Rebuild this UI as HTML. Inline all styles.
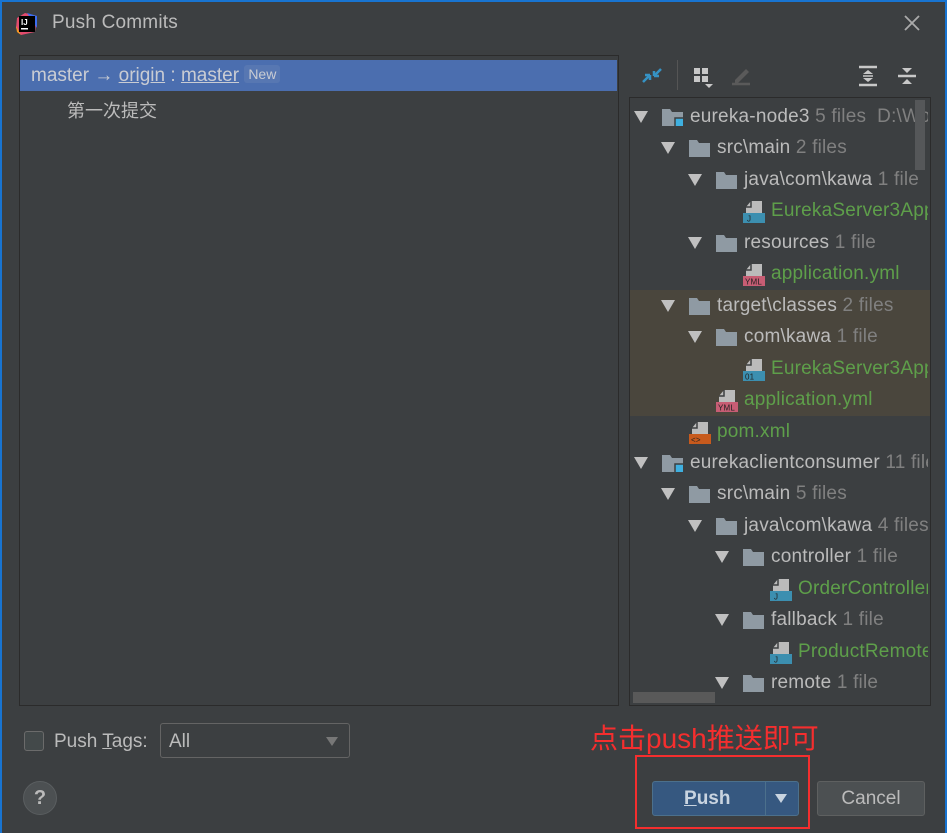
<!DOCTYPE html>
<html><head><meta charset="utf-8"><style>
*{margin:0;padding:0;box-sizing:border-box}
body{width:947px;height:833px;overflow:hidden;background:#3c3f41;font-family:"Liberation Sans","Noto Sans CJK SC",sans-serif;color:#bbbbbb;position:relative}
.frame{position:absolute;left:0;top:0;width:947px;height:833px;border:2px solid #1874d1;border-bottom:none}
.abs{position:absolute}
.row{position:absolute;height:31px;font-size:19px;letter-spacing:0.2px;line-height:31px;white-space:nowrap}
.arr{position:absolute;width:0;height:0;border-left:7px solid transparent;border-right:7px solid transparent;border-top:12px solid #c0c0c0;top:10px}
.fold{position:absolute;top:8px;width:21px;height:17px}
.g{color:#808080}
.gr{color:#5e9f4a}
.file{position:absolute;top:4px;width:22px;height:24px}
</style></head><body>
<div class="frame"></div>
<svg class="abs" style="left:15px;top:12px" width="24" height="24" viewBox="0 0 24 24"><path d="M2 6 L10 1 L22 4 L20 20 L6 23 L1 16Z" fill="#e34b6e"/><path d="M12 1 L22 4 L22 16Z" fill="#3b6df0"/><path d="M1 14 L6 23 L2 20Z" fill="#f39b1f"/><rect x="4" y="4" width="16" height="16" fill="#000"/><text x="6" y="13" font-size="8" font-weight="bold" fill="#fff" font-family="Liberation Sans">IJ</text><rect x="6" y="16" width="7" height="1.5" fill="#fff"/></svg>
<div class="abs" style="left:52px;top:12px;font-size:19px;letter-spacing:0.2px;color:#bbbbbb">Push Commits</div>
<svg class="abs" style="left:903px;top:14px" width="18" height="18"><path d="M2 2L16 16M16 2L2 16" stroke="#aaa" stroke-width="1.8"/></svg>
<div class="abs" style="left:19px;top:55px;width:600px;height:651px;border:1px solid #2b2b2b;background:#3c3f41"></div>
<div class="abs" style="left:20px;top:60px;width:597px;height:31px;background:#4b6eaf"></div>
<div class="abs" style="left:31px;top:65px;font-size:19px;color:#c9ccd3;white-space:nowrap">master → <u>origin</u> : <u>master</u> <span style="font-size:14px;background:#5777b2;padding:1px 4px;border-radius:3px;color:#c9ccd3;position:relative;top:-2px">New</span></div>
<div class="abs" style="left:67px;top:97px;font-size:18px;color:#bbbbbb">第一次提交</div>
<svg class="abs" style="left:640px;top:64px" width="24" height="24"><path d="M3 18L10 11M10 11H5M10 11V16M21 5L14 12M14 12H19M14 12V7" stroke="#3592c4" stroke-width="2.5" fill="none"/></svg>
<div class="abs" style="left:677px;top:60px;width:1px;height:30px;background:#555"></div>
<svg class="abs" style="left:692px;top:66px" width="26" height="26"><rect x="2" y="2" width="6" height="6" fill="#c8c8c8"/><rect x="10" y="2" width="6" height="6" fill="#c8c8c8"/><rect x="2" y="10" width="6" height="6" fill="#c8c8c8"/><rect x="10" y="10" width="6" height="6" fill="#c8c8c8"/><path d="M13 18h8l-4 4z" fill="#c8c8c8"/></svg>
<svg class="abs" style="left:729px;top:64px" width="24" height="24"><path d="M3 20H21" stroke="#5a5a5a" stroke-width="2.5"/><path d="M6 16L17 5L20 8L9 19H6Z" fill="#5a5a5a"/></svg>
<svg class="abs" style="left:857px;top:65px" width="22" height="22"><path d="M2 2H20M2 20H20" stroke="#c8c8c8" stroke-width="2.5"/><path d="M6 9L11 5L16 9ZM6 13L11 17L16 13Z" fill="#c8c8c8"/><path d="M6 11H16" stroke="#c8c8c8" stroke-width="1.5"/></svg>
<svg class="abs" style="left:896px;top:65px" width="22" height="22"><path d="M2 11H20" stroke="#c8c8c8" stroke-width="2.5"/><path d="M6 3L11 8L16 3ZM6 19L11 14L16 19Z" fill="#c8c8c8"/></svg>
<div class="abs" style="left:629px;top:97px;width:302px;height:609px;border:1px solid #2b2b2b;background:#3c3f41;overflow:hidden">
<div class="abs" style="left:0;top:192px;width:300px;height:126px;background:#4a463d"></div>
</div>
<div class="abs" style="left:630px;top:98px;width:298px;height:607px;overflow:hidden">
<div id="rows"></div>
</div>
<div class="abs" style="left:915px;top:100px;width:10px;height:70px;background:#555759"></div>
<div class="abs" style="left:633px;top:692px;width:82px;height:11px;background:#595959"></div>
<script>
var rows=[
[0,'m','eureka-node3',' 5 files&nbsp; D:\\Wo'],
[1,'f','src\\main',' 2 files'],
[2,'f','java\\com\\kawa',' 1 file'],
[3,'j','EurekaServer3App',''],
[2,'f','resources',' 1 file'],
[3,'y','application.yml',''],
[1,'f','target\\classes',' 2 files'],
[2,'f','com\\kawa',' 1 file'],
[3,'c','EurekaServer3App',''],
[2,'y','application.yml',''],
[1,'x','pom.xml',''],
[0,'m','eurekaclientconsumer',' 11 files'],
[1,'f','src\\main',' 5 files'],
[2,'f','java\\com\\kawa',' 4 files'],
[3,'f','controller',' 1 file'],
[4,'j','OrderController',''],
[3,'f','fallback',' 1 file'],
[4,'j','ProductRemote',''],
[3,'f','remote',' 1 file']];
var h='';
rows.forEach(function(r,i){
var top=3+i*31.45, x=4+r[0]*27;
h+='<div class="row" style="top:'+top+'px;left:0;width:300px">';
var fileType=(r[1]=='j'||r[1]=='y'||r[1]=='c'||r[1]=='x');
if(!fileType){h+='<div class="arr" style="left:'+x+'px"></div>';
 h+='<svg class="fold" style="left:'+(x+28)+'px" viewBox="0 0 21 17"><path d="M0 0H8L10 3H21V17H0Z" fill="#8f9aa3"/>'+(r[1]=='m'?'<rect x="13" y="9" width="9" height="9" fill="#3fb0e0" stroke="#3c3f41" stroke-width="1.5"/>':'')+'</svg>';
 h+='<span style="position:absolute;left:'+(x+56)+'px;color:#bbbbbb">'+r[2]+'<span class="g">'+r[3]+'</span></span>';}
else{var c={j:'#3c8fb0',y:'#c75d74',c:'#3c8fb0',x:'#c75a1d'}[r[1]],t={j:'J',y:'YML',c:'01',x:'&lt;&gt;'}[r[1]];
 h+='<svg class="file" style="left:'+(x+28)+'px" viewBox="0 0 22 24"><path d="M8 2H19V14H3V8Z" fill="#bbbbbb"/><path d="M8 2V8H3" fill="none" stroke="#3c3f41" stroke-width="1.5"/><rect x="0" y="14" width="22" height="10" fill="'+c+'"/><text x="'+(r[1]=='j'?4:2)+'" y="22.5" font-size="8" fill="#222" font-family="Liberation Sans">'+t+'</text></svg>';
 h+='<span class="gr" style="position:absolute;left:'+(x+56)+'px">'+r[2]+'</span>';}
h+='</div>';});
document.getElementById('rows').innerHTML=h;
</script>
<div class="abs" style="left:24px;top:731px;width:20px;height:20px;border:1px solid #6b6b6b;border-radius:3px;background:#43494a"></div>
<div class="abs" style="left:54px;top:731px;font-size:19px;color:#bbbbbb">Push <u>T</u>ags:</div>
<div class="abs" style="left:160px;top:723px;width:190px;height:35px;border:1px solid #646464;border-radius:3px;background:#3c3f41"></div>
<div class="abs" style="left:169px;top:731px;font-size:19px;color:#bbbbbb">All</div>
<div class="abs" style="left:326px;top:737px;border-left:6px solid transparent;border-right:6px solid transparent;border-top:9px solid #777"></div>
<div class="abs" style="left:590px;top:717px;font-size:28px;color:#f52e2e;white-space:nowrap">点击push推送即可</div>
<div class="abs" style="left:635px;top:755px;width:175px;height:74px;border:2px solid #f52e2e"></div>
<div class="abs" style="left:23px;top:781px;width:34px;height:34px;border-radius:50%;background:#4c5052;border:1px solid #5a5e60;color:#bbb;font-size:20px;font-weight:bold;text-align:center;line-height:32px">?</div>
<div class="abs" style="left:652px;top:781px;width:147px;height:35px;background:#365880;border:1px solid #4c708c;border-radius:3px"></div>
<div class="abs" style="left:765px;top:782px;width:1px;height:33px;background:#4c708c"></div>
<div class="abs" style="left:684px;top:788px;font-size:19px;font-weight:bold;color:#c9d4e0"><u>P</u>ush</div>
<div class="abs" style="left:775px;top:794px;border-left:6px solid transparent;border-right:6px solid transparent;border-top:9px solid #c9d4e0"></div>
<div class="abs" style="left:817px;top:781px;width:108px;height:35px;background:#4c5052;border:1px solid #5e6060;border-radius:3px;text-align:center;line-height:33px;font-size:19px;color:#bbbbbb">Cancel</div>
</body></html>
